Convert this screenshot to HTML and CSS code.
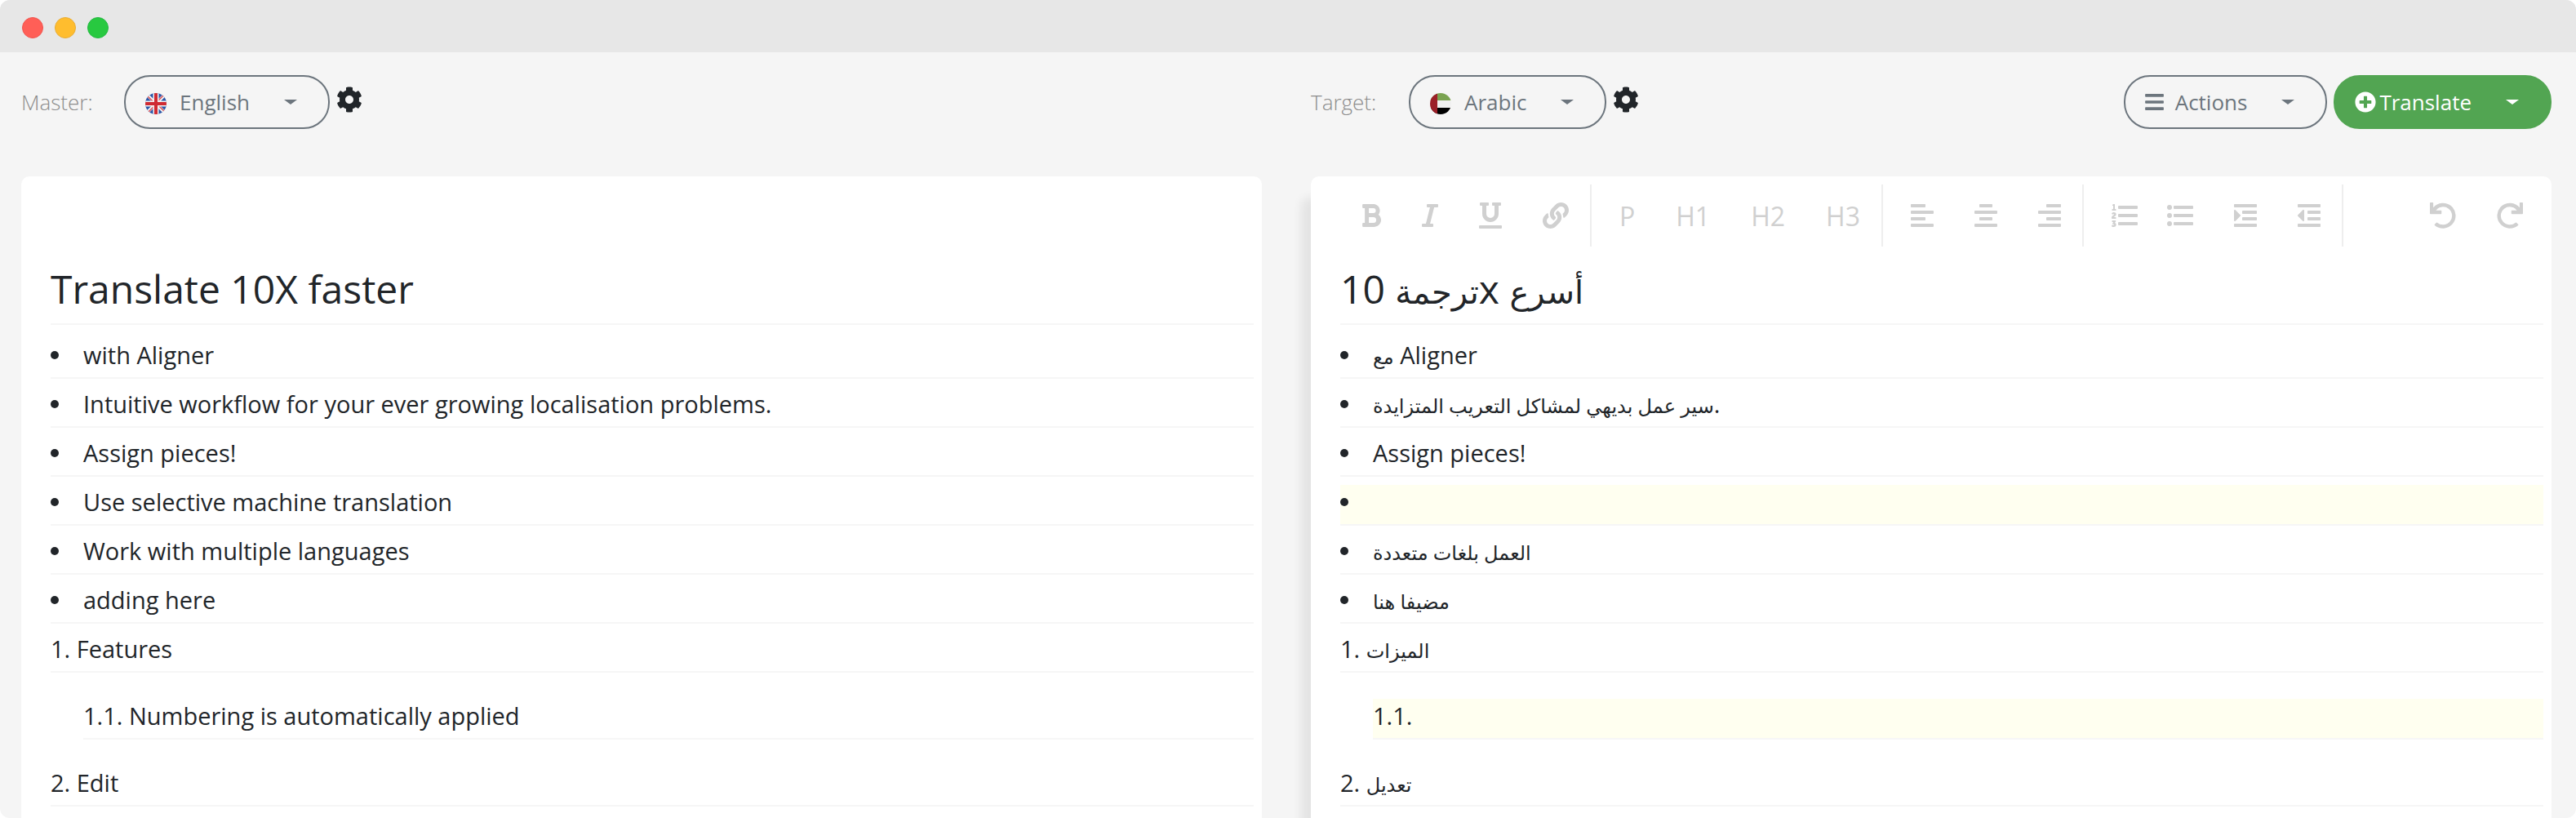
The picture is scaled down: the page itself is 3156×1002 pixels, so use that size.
FILE: index.html
```html
<!DOCTYPE html>
<html lang="en">
<head>
<meta charset="utf-8">
<title>Aligner</title>
<link rel="stylesheet" href="styles.css">
</head>
<body>
<svg class="sprite" aria-hidden="true">
  <symbol id="gear" viewBox="0 0 512 512"><path d="M487.400 315.700l-42.600-24.600c4.300-23.200 4.300-47 0-70.200l42.600-24.600c4.900-2.800 7.100-8.600 5.500-14-11.100-35.600-30-67.800-54.700-94.600-3.800-4.100-10-5.100-14.800-2.300L380.800 110c-17.900-15.400-38.500-27.300-60.800-35.100V25.800c0-5.600-3.900-10.500-9.400-11.700-36.700-8.200-74.300-7.800-109.200 0-5.500 1.200-9.400 6.100-9.400 11.700V75c-22.200 7.900-42.800 19.800-60.800 35.100L88.700 85.500c-4.900-2.800-11-1.900-14.800 2.300-24.700 26.700-43.600 58.900-54.700 94.600-1.700 5.400.6 11.200 5.500 14L67.300 221c-4.300 23.200-4.300 47 0 70.200l-42.600 24.600c-4.900 2.800-7.100 8.600-5.500 14 11.100 35.600 30 67.800 54.700 94.600 3.800 4.100 10 5.100 14.800 2.300l42.600-24.600c17.900 15.400 38.500 27.300 60.800 35.100v49.200c0 5.600 3.900 10.500 9.400 11.700 36.700 8.200 74.300 7.800 109.200 0 5.500-1.200 9.400-6.100 9.400-11.700v-49.200c22.200-7.900 42.800-19.800 60.800-35.100l42.600 24.600c4.900 2.800 11 1.900 14.800-2.300 24.700-26.700 43.600-58.900 54.700-94.600 1.500-5.500-.7-11.300-5.600-14.100zM256 336c-44.100 0-80-35.900-80-80s35.900-80 80-80 80 35.900 80 80-35.900 80-80 80z"/></symbol>
  <symbol id="align-left" viewBox="0 0 448 512"><path d="M13 32h262a13 13 0 0 1 13 13v38a13 13 0 0 1-13 13H13A13 13 0 0 1 0 83V45a13 13 0 0 1 13-13zM13 288h262a13 13 0 0 1 13 13v38a13 13 0 0 1-13 13H13a13 13 0 0 1-13-13v-38a13 13 0 0 1 13-13zM16 160h416a16 16 0 0 1 16 16v32a16 16 0 0 1-16 16H16a16 16 0 0 1-16-16v-32a16 16 0 0 1 16-16zM16 416h416a16 16 0 0 1 16 16v32a16 16 0 0 1-16 16H16a16 16 0 0 1-16-16v-32a16 16 0 0 1 16-16z"/></symbol>
  <symbol id="align-center" viewBox="0 0 448 512"><path d="M109 32h230a13 13 0 0 1 13 13v38a13 13 0 0 1-13 13H109a13 13 0 0 1-13-13V45a13 13 0 0 1 13-13zM109 288h230a13 13 0 0 1 13 13v38a13 13 0 0 1-13 13H109a13 13 0 0 1-13-13v-38a13 13 0 0 1 13-13zM16 160h416a16 16 0 0 1 16 16v32a16 16 0 0 1-16 16H16a16 16 0 0 1-16-16v-32a16 16 0 0 1 16-16zM16 416h416a16 16 0 0 1 16 16v32a16 16 0 0 1-16 16H16a16 16 0 0 1-16-16v-32a16 16 0 0 1 16-16z"/></symbol>
</svg>

<div class="window">
  <header class="titlebar">
    <span class="light red"></span><span class="light amber"></span><span class="light green"></span>
  </header>

  <main class="workspace">
    <section class="column">
      <div class="controls">
        <label class="caption" for="master">Master:</label>
        <button class="pill" id="master" type="button">
          <svg class="flag" viewBox="0 0 26 26" aria-hidden="true">
            <defs><clipPath id="disc"><circle cx="13" cy="13" r="13"/></clipPath></defs>
            <g clip-path="url(#disc)">
              <path fill="#2a56a8" d="M0 0h26v26H0z"/>
              <path stroke="#f4f4f4" stroke-width="4" d="M1 1l24 24M25 1L1 25"/>
              <path stroke="#d8555a" stroke-width="1.600" d="M2 3l9 9M24 23l-9-9M23 2l-9 9M3 24l9-9"/>
              <path stroke="#f4f4f4" stroke-width="7" d="M13 0v26M0 13h26"/>
              <path stroke="#cf2b33" stroke-width="4" d="M13 0v26M0 13h26"/>
            </g>
          </svg>
          <span class="pill-text">English</span><span class="caret"></span>
        </button>
        <button class="settings" type="button" aria-label="Master settings"><svg viewBox="0 0 512 512"><use href="#gear"/></svg></button>
      </div>
      <article class="panel">
        <div class="toolbar"></div>
        <div class="doc">
          <h1>Translate 10X faster</h1>
          <ul>
            <li>with Aligner</li>
            <li>Intuitive workflow for your ever growing localisation problems.</li>
            <li>Assign pieces!</li>
            <li>Use selective machine translation</li>
            <li>Work with multiple languages</li>
            <li>adding here</li>
          </ul>
          <p>1. Features</p>
          <p class="nested">1.1. Numbering is automatically applied</p>
          <p>2. Edit</p>
        </div>
      </article>
    </section>

    <section class="column">
      <div class="controls">
        <label class="caption" for="target">Target:</label>
        <button class="pill" id="target" type="button">
          <svg class="flag" viewBox="0 0 26 26" aria-hidden="true">
            <g clip-path="url(#disc)">
              <path fill="#7aa351" d="M0 0h26v9H0z"/>
              <path fill="#f0f0f0" d="M0 9h26v9H0z"/>
              <path fill="#000" d="M0 18h26v8H0z"/>
              <path fill="#9b1f28" d="M0 0h9v26H0z"/>
            </g>
          </svg>
          <span class="pill-text">Arabic</span><span class="caret"></span>
        </button>
        <button class="settings" type="button" aria-label="Target settings"><svg viewBox="0 0 512 512"><use href="#gear"/></svg></button>
        <div class="actions">
          <button class="pill" type="button">
            <svg class="bars" viewBox="0 0 448 512" aria-hidden="true"><path d="M16 132h416a16 16 0 0 0 16-16V76a16 16 0 0 0-16-16H16A16 16 0 0 0 0 76v40a16 16 0 0 0 16 16zm0 160h416a16 16 0 0 0 16-16v-40a16 16 0 0 0-16-16H16a16 16 0 0 0-16 16v40a16 16 0 0 0 16 16zm0 160h416a16 16 0 0 0 16-16v-40a16 16 0 0 0-16-16H16a16 16 0 0 0-16 16v40a16 16 0 0 0 16 16z"/></svg>
            <span class="pill-text">Actions</span><span class="caret"></span>
          </button>
          <button class="pill primary" type="button">
            <svg class="plus" viewBox="0 0 512 512" aria-hidden="true"><path d="M256 8C119 8 8 119 8 256s111 248 248 248 248-111 248-248S393 8 256 8zm144 276c0 6.600-5.400 12-12 12h-92v92c0 6.600-5.400 12-12 12h-56c-6.600 0-12-5.400-12-12v-92h-92c-6.600 0-12-5.400-12-12v-56c0-6.600 5.400-12 12-12h92v-92c0-6.600 5.400-12 12-12h56c6.600 0 12 5.400 12 12v92h92c6.600 0 12 5.400 12 12v56z"/></svg>
            <span class="pill-text">Translate</span><span class="caret"></span>
          </button>
        </div>
      </div>
      <article class="panel raised">
        <div class="toolbar">
          <div class="group">
            <button type="button" aria-label="Bold"><svg viewBox="0 0 384 512"><path d="M333.500 238a122 122 0 0 0 27-65.200C367.900 96.500 308 32 233.400 32H34a16 16 0 0 0-16 16v48a16 16 0 0 0 16 16h31.900v288H34a16 16 0 0 0-16 16v48a16 16 0 0 0 16 16h209.300c70.800 0 134.100-51.800 140.500-122.300 4.700-51.500-18.700-95-50.300-119.700zM145.700 112h87.800a48 48 0 0 1 0 96h-87.800zm87.800 288h-87.800V288h87.800a56 56 0 0 1 0 112z"/></svg></button>
            <button type="button" aria-label="Italic"><svg viewBox="0 0 320 512"><path d="M320 48v32a16 16 0 0 1-16 16h-62.800l-80 320H208a16 16 0 0 1 16 16v32a16 16 0 0 1-16 16H16a16 16 0 0 1-16-16v-32a16 16 0 0 1 16-16h62.800l80-320H112a16 16 0 0 1-16-16V48a16 16 0 0 1 16-16h192a16 16 0 0 1 16 16z"/></svg></button>
            <button type="button" aria-label="Underline"><svg viewBox="0 0 448 512"><path d="M32 64h32v160c0 88.200 71.800 160 160 160s160-71.800 160-160V64h32a16 16 0 0 0 16-16V16a16 16 0 0 0-16-16H272a16 16 0 0 0-16 16v32a16 16 0 0 0 16 16h32v160a80 80 0 0 1-160 0V64h32a16 16 0 0 0 16-16V16a16 16 0 0 0-16-16H32a16 16 0 0 0-16 16v32a16 16 0 0 0 16 16zm400 384H16a16 16 0 0 0-16 16v32a16 16 0 0 0 16 16h416a16 16 0 0 0 16-16v-32a16 16 0 0 0-16-16z"/></svg></button>
            <button type="button" aria-label="Link"><svg viewBox="0 0 512 512"><path d="M326.612 185.391c59.747 59.809 58.927 155.698.36 214.590-.11.120-.24.250-.36.370l-67.200 67.200c-59.270 59.270-155.699 59.262-214.960 0-59.270-59.260-59.270-155.700 0-214.960l37.106-37.106c9.840-9.840 26.786-3.300 27.294 10.606.648 17.722 3.826 35.527 9.690 52.721 1.986 5.822.567 12.262-3.783 16.612l-13.087 13.087c-28.026 28.026-28.905 73.660-1.155 101.960 28.024 28.579 74.086 28.749 102.325.510l67.200-67.190c28.191-28.191 28.073-73.757 0-101.830-3.701-3.694-7.429-6.564-10.341-8.569a16.037 16.037 0 0 1-6.947-12.606c-.396-10.567 3.348-21.456 11.698-29.806l21.054-21.055c5.521-5.521 14.182-6.199 20.584-1.731a152.482 152.482 0 0 1 20.522 17.197zM467.547 44.449c-59.261-59.262-155.690-59.270-214.960 0l-67.200 67.200c-.120.120-.250.250-.360.370-58.566 58.892-59.387 154.781.360 214.590a152.454 152.454 0 0 0 20.521 17.196c6.402 4.468 15.064 3.789 20.584-1.731l21.054-21.055c8.350-8.350 12.094-19.239 11.698-29.806a16.037 16.037 0 0 0-6.947-12.606c-2.912-2.005-6.640-4.875-10.341-8.569-28.073-28.073-28.191-73.639 0-101.830l67.200-67.190c28.239-28.239 74.300-28.069 102.325.510 27.750 28.300 26.872 73.934-1.155 101.960l-13.087 13.087c-4.350 4.350-5.769 10.790-3.783 16.612 5.864 17.194 9.042 34.999 9.690 52.721.509 13.906 17.454 20.446 27.294 10.606l37.106-37.106c59.271-59.259 59.271-155.699.001-214.959z"/></svg></button>
          </div>
          <div class="group">
            <button type="button">P</button>
            <button type="button">H1</button>
            <button type="button">H2</button>
            <button type="button">H3</button>
          </div>
          <div class="group">
            <button type="button" aria-label="Align left"><svg viewBox="0 0 448 512"><use href="#align-left"/></svg></button>
            <button type="button" aria-label="Align centre"><svg viewBox="0 0 448 512"><use href="#align-center"/></svg></button>
            <button type="button" aria-label="Align right"><svg viewBox="0 0 448 512"><use href="#align-left" transform="matrix(-1 0 0 1 448 0)"/></svg></button>
          </div>
          <div class="group">
            <button class="tight" type="button" aria-label="Numbered list"><svg viewBox="0 0 512 512"><path d="M61.770 401l17.500-20.150a19.920 19.920 0 0 0 5.070-14.190v-3.310C84.340 356 80.500 352 73 352H16a8 8 0 0 0-8 8v16a8 8 0 0 0 8 8h22.830a157.410 157.410 0 0 0-11 12.310l-5.610 7c-4 5.070-5.250 10.130-2.800 14.880l1.050 1.930c3 5.760 6.290 7.880 12.250 7.880h4.730c10.330 0 15.940 2.440 15.940 9.090 0 4.720-4.200 8.220-14.360 8.220a41.540 41.540 0 0 1-15.470-3.120c-6.490-3.880-11.740-3.500-15.600 3.120l-5.590 9.310c-3.720 6.130-3.190 11.720 2.630 15.940 7.710 4.690 20.380 9.440 37 9.440 34.160 0 48.500-22.750 48.500-44.120-.030-14.380-9.120-29.760-28.730-34.880zM16 160h64a8 8 0 0 0 8-8v-16a8 8 0 0 0-8-8H64V40a8 8 0 0 0-8-8H32a8 8 0 0 0-7.140 4.420l-8 16A8 8 0 0 0 24 64h8v64H16a8 8 0 0 0-8 8v16a8 8 0 0 0 8 8zm-3.910 160H80a8 8 0 0 0 8-8v-16a8 8 0 0 0-8-8H41.320c3.290-10.290 48.340-18.680 48.340-56.440 0-29.060-25-39.560-44.470-39.560-21.360 0-33.800 10-40.460 18.750-4.370 5.590-3 10.840 2.800 15.370l8.580 6.880c5.610 4.560 11 2.470 16.120-2.440a13.440 13.440 0 0 1 9.460-3.840c3.330 0 9.280 1.560 9.280 8.750C51 248.190 0 257.310 0 304.590v4C0 316 5.080 320 12.090 320z"/><path d="M496 224H144a16 16 0 0 0-16 16v32a16 16 0 0 0 16 16h352a16 16 0 0 0 16-16v-32a16 16 0 0 0-16-16zm0-160H144a16 16 0 0 0-16 16v32a16 16 0 0 0 16 16h352a16 16 0 0 0 16-16V80a16 16 0 0 0-16-16zm0 320H144a16 16 0 0 0-16 16v32a16 16 0 0 0 16 16h352a16 16 0 0 0 16-16v-32a16 16 0 0 0-16-16z"/></svg></button>
            <button type="button" aria-label="Bulleted list"><svg viewBox="0 0 512 512"><path d="M48 48a48 48 0 1 0 48 48 48 48 0 0 0-48-48zm0 160a48 48 0 1 0 48 48 48 48 0 0 0-48-48zm0 160a48 48 0 1 0 48 48 48 48 0 0 0-48-48zm448 16H144a16 16 0 0 0-16 16v32a16 16 0 0 0 16 16h352a16 16 0 0 0 16-16v-32a16 16 0 0 0-16-16zm0-320H144a16 16 0 0 0-16 16v32a16 16 0 0 0 16 16h352a16 16 0 0 0 16-16V80a16 16 0 0 0-16-16zm0 160H144a16 16 0 0 0-16 16v32a16 16 0 0 0 16 16h352a16 16 0 0 0 16-16v-32a16 16 0 0 0-16-16z"/></svg></button>
            <button type="button" aria-label="Indent"><svg viewBox="0 0 448 512"><path d="M27.310 363.300l96-96a16 16 0 0 0 0-22.620l-96-96C17.270 138.660 0 145.780 0 160v192c0 14.310 17.330 21.300 27.310 11.300zM435 160H173a13 13 0 0 0-13 13v38a13 13 0 0 0 13 13h262a13 13 0 0 0 13-13v-38a13 13 0 0 0-13-13zM435 288H173a13 13 0 0 0-13 13v38a13 13 0 0 0 13 13h262a13 13 0 0 0 13-13v-38a13 13 0 0 0-13-13zM13 32h422a13 13 0 0 1 13 13v38a13 13 0 0 1-13 13H13A13 13 0 0 1 0 83V45a13 13 0 0 1 13-13zM13 416h422a13 13 0 0 1 13 13v38a13 13 0 0 1-13 13H13a13 13 0 0 1-13-13v-38a13 13 0 0 1 13-13z"/></svg></button>
            <button type="button" aria-label="Outdent"><svg viewBox="0 0 448 512"><path d="M100.690 363.290c10 10 27.310 3 27.310-11.290V160c0-14.320-17.330-21.310-27.310-11.310l-96 96a16 16 0 0 0 0 22.620zM435 160H205a13 13 0 0 0-13 13v38a13 13 0 0 0 13 13h230a13 13 0 0 0 13-13v-38a13 13 0 0 0-13-13zM435 288H205a13 13 0 0 0-13 13v38a13 13 0 0 0 13 13h230a13 13 0 0 0 13-13v-38a13 13 0 0 0-13-13zM13 32h422a13 13 0 0 1 13 13v38a13 13 0 0 1-13 13H13A13 13 0 0 1 0 83V45a13 13 0 0 1 13-13zM13 416h422a13 13 0 0 1 13 13v38a13 13 0 0 1-13 13H13a13 13 0 0 1-13-13v-38a13 13 0 0 1 13-13z"/></svg></button>
          </div>
          <div class="history">
            <button type="button" aria-label="Undo"><svg viewBox="0 0 512 512"><path id="undo" d="M12 0h42a12 12 0 0 1 12 12v88A248 248 0 1 1 94 446a12 12 0 0 1 0-17l34-34a12 12 0 0 1 16 0A176 176 0 1 0 118 154h98a12 12 0 0 1 12 12v50a12 12 0 0 1-12 12H12a12 12 0 0 1-12-12V12A12 12 0 0 1 12 0z"/></svg></button>
            <button type="button" aria-label="Redo"><svg viewBox="0 0 512 512"><use href="#undo" transform="matrix(-1 0 0 1 512 0)"/></svg></button>
          </div>
        </div>
        <div class="doc">
          <h1>10 <bdi lang="ar">ترجمة</bdi>x <bdi lang="ar">أسرع</bdi></h1>
          <ul>
            <li><bdi lang="ar">مع</bdi> Aligner</li>
            <li><bdi lang="ar">سير عمل بديهي لمشاكل التعريب المتزايدة</bdi>.</li>
            <li>Assign pieces!</li>
            <li class="missing"></li>
            <li><bdi lang="ar">العمل بلغات متعددة</bdi></li>
            <li><bdi lang="ar">مضيفا هنا</bdi></li>
          </ul>
          <p>1. <bdi lang="ar">الميزات</bdi></p>
          <p class="nested missing">1.1.</p>
          <p>2. <bdi lang="ar">تعديل</bdi></p>
        </div>
      </article>
    </section>
  </main>
</div>
</body>
</html>
```
FILE: styles.css
```css
* { box-sizing: border-box; }

body {
  margin: 0;
  background: #fff;
  color: #212529;
  font-family: "Open Sans", "DejaVu Sans", sans-serif;
  font-size: 29px;
}

button {
  margin: 0;
  padding: 0;
  border: 0;
  background: none;
  color: inherit;
  font: inherit;
}

svg { display: block; fill: currentColor; }

.sprite { display: none; }

.window {
  display: flex;
  flex-direction: column;
  height: 100vh;
  overflow: hidden;
  border-radius: 12px;
  background: #f5f5f5;
}

.titlebar {
  display: flex;
  flex: none;
  align-items: center;
  gap: 14px;
  height: 64px;
  padding: 4px 27px 0;
  background: #e7e7e7;
}

.light { width: 26px; height: 26px; border: 1px solid; border-radius: 50%; }
.red { background: #ff5f57; border-color: #f2544d; }
.amber { background: #ffbd2e; border-color: #e9ad35; }
.green { background: #28c940; border-color: #22b840; }

.workspace {
  display: grid;
  flex: 1;
  grid-template-columns: 1fr 1fr;
  gap: 60px;
  min-height: 0;
  padding: 28px 30px 0 26px;
}

.column { display: flex; flex-direction: column; min-width: 0; }

.controls {
  display: flex;
  flex: none;
  align-items: center;
  height: 66px;
  margin-bottom: 58px;
  font-size: 26px;
}

.caption { width: 120px; color: #8c8c8c; font-weight: 300; }
.column:first-child .caption { width: 126px; }

.pill {
  display: flex;
  align-items: center;
  height: 66px;
  padding: 0 38px 0 24px;
  border: 2px solid #6c757d;
  border-radius: 32px;
  color: #6c757d;
}

.pill-text { margin: 0 42px 0 16px; }
.flag { width: 26px; height: 26px; margin-top: 4px; }
.bars { width: 23px; height: 26px; }
.plus { width: 26px; height: 26px; }
.bars + .pill-text { margin-left: 14px; }
.plus + .pill-text { margin-left: 4px; }

.caret {
  border: 8px solid transparent;
  border-top: 6px solid currentColor;
  border-bottom: 0;
}

.primary { border-color: #52a552; background: #52a552; color: #fff; }

.settings { margin: 0 0 6px 8px; color: #212529; }
.settings svg { width: 32px; height: 32px; }

.actions { display: flex; gap: 8px; margin-left: auto; }

.panel { flex: 1; min-height: 0; border-radius: 10px 10px 0 0; background: #fff; }
.raised { box-shadow: -12px 26px 12px rgba(0, 0, 0, .07); }

.toolbar {
  display: flex;
  height: 96px;
  padding: 10px 10px 10px 37px;
  color: #d0d0d0;
  font-size: 32px;
}

.group { display: flex; padding: 0 1px 0 9px; border-right: 2px solid #eee; }
.group:first-child { padding-left: 0; }
.toolbar button { padding: 0 25px; }
.toolbar button.tight { padding-right: 11px; }
.toolbar svg { height: 32px; }
.history { display: flex; margin-left: auto; }

.doc { padding: 0 10px 0 36px; }

h1 {
  margin: 0 0 16px;
  border-bottom: 2px solid #f6f6f6;
  font-size: 48px;
  font-weight: 400;
  line-height: 84px;
}

ul { margin: 0; padding: 0; list-style: none; }

li, p {
  height: 50px;
  margin: 0 0 10px;
  padding-bottom: 6px;
  border-bottom: 2px solid #f6f6f6;
  line-height: 42px;
}

li::before {
  display: inline-block;
  width: 10px;
  height: 10px;
  margin-right: 30px;
  border-radius: 50%;
  background: #212529;
  vertical-align: 6px;
  content: "";
}

/* Arabic glyphs run wide beside Open Sans, so they are set a step smaller. */
bdi { font-size: 24px; line-height: 1; }
h1 bdi { font-size: 40px; }

.nested { margin: 32px 0 32px 40px; }
.missing { background: #fffff0; }
```
